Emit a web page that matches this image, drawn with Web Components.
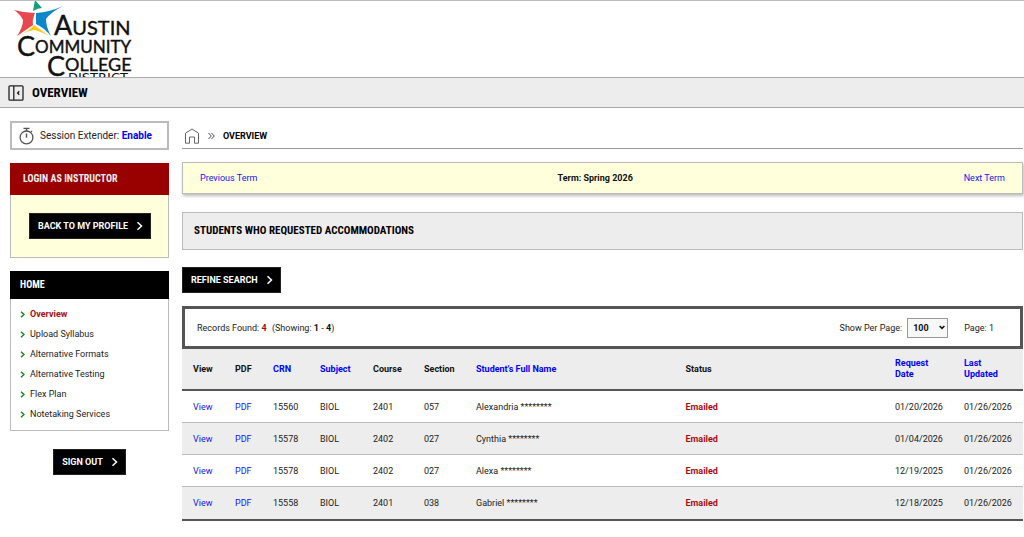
<!DOCTYPE html>
<html lang="en">
<head>
<meta charset="utf-8">
<title>Overview</title>
<style>
    body {
        margin: 0;
        background: #fff;
        color: #222;
        font: 9px/12px Roboto, sans-serif;
        --condensed: "Roboto Condensed", "Liberation Sans Narrow", Roboto, sans-serif;
        --link: #1414f0;
        --red: #a60d12;
        --line: #bbb;
        --dark: #555;
        --grey: #ededed;
        --cream: #ffffdc;
    }
</style>
</head>
<body>

<acc-page>
    <acc-logo slot="header"></acc-logo>
    <acc-title-bar slot="header">Overview</acc-title-bar>

    <acc-session slot="side"></acc-session>
    <acc-panel slot="side" kind="login">
        <span slot="heading">Login As Instructor</span>
        <acc-button>Back to My Profile</acc-button>
    </acc-panel>
    <acc-panel slot="side">
        <span slot="heading">Home</span>
        <acc-menu></acc-menu>
    </acc-panel>
    <acc-button slot="side" class="signout">Sign Out</acc-button>

    <acc-crumbs>Overview</acc-crumbs>
    <acc-term-nav>Term: Spring 2026</acc-term-nav>
    <acc-section-title>Students Who Requested Accommodations</acc-section-title>
    <acc-button class="refine">Refine Search</acc-button>
    <acc-records></acc-records>
</acc-page>

<script>
// Base: clones the template of the element into an open shadow root
class AccElement extends HTMLElement {
    constructor() {
        super();
        const template = document.createElement('template');
        template.innerHTML = this.constructor.markup;
        this.attachShadow({mode: 'open'}).appendChild(template.content.cloneNode(true));
    }
}

class AccPage extends AccElement {
    static markup = `
        <style>
            :host { display: block; }
            .body { display: grid; grid-template-columns: 159px 1fr; gap: 13px; padding: 13px 1px 16px 10px; }
            aside { display: flex; flex-direction: column; gap: 13px; }
            main { display: flex; flex-direction: column; min-width: 0; }
            ::slotted(.signout) { align-self: center; margin-top: 5px; }
            ::slotted(.refine) { align-self: flex-start; margin: 17px 0 13px; }
        </style>
        <header><slot name="header"></slot></header>
        <div class="body">
            <aside><slot name="side"></slot></aside>
            <main><slot></slot></main>
        </div>
    `;
}

class AccLogo extends AccElement {
    static markup = `
        <style>
            :host { display: block; border-top: 1px solid var(--line); }
            svg { display: block; margin-left: 10px; }
            text { font-family: Lato, sans-serif; fill: #111; stroke: #111; stroke-width: .4px; }
            .cap { font-size: 27px; }
            .wide { font-size: 20px; }
            .small { font-size: 18px; }
            .long { font-size: 17px; }
            .district { font-family: "DejaVu Sans", sans-serif; font-size: 13px; stroke: none; }
        </style>
        <svg width="130" height="76" viewBox="10 1 130 76" role="img" aria-label="Austin Community College District">
            <path d="M14 10Q25 13 35 13Q32 20 33 25L17 36Q23 27 23 20Q20 14 14 10Z" fill="#e8474f"/>
            <path d="M35 0 42 8Q38 8 33 11Z" fill="#15a079"/>
            <path d="M36 13Q50 12 63 6Q51 12 46 19Q46 27 51 36Q43 27 36 24Z" fill="#0e86cb"/>
            <path d="M22 34Q30 30 34 25Q40 29 49 36Q40 31 34 30Q28 31 22 34Z" fill="#f8c820"/>
            <text x="54" y="35"><tspan class="cap">A</tspan><tspan class="wide">USTIN</tspan></text>
            <text x="17" y="53"><tspan class="cap" dy="3">C</tspan><tspan class="long" dy="-3">OMMUNITY</tspan></text>
            <text x="47" y="71"><tspan class="cap" dy="5">C</tspan><tspan class="small" dy="-5">OLLEGE</tspan></text>
            <text x="68" y="82" class="district">DISTRICT</text>
        </svg>
    `;
}

class AccTitleBar extends AccElement {
    static markup = `
        <style>
            :host {
                display: flex; align-items: center; gap: 8px; height: 29px; padding-left: 8px;
                background: var(--grey); border: solid #aaa; border-width: 1px 0;
            }
            button { display: flex; padding: 0; border: 0; background: none; }
            h1 { margin: 0; font: bold 13px/16px var(--condensed); color: #000; text-transform: uppercase; }
        </style>
        <button aria-label="Collapse menu">
            <svg width="16" height="16" viewBox="0 0 16 16" fill="none" stroke="#222">
                <rect x="1" y=".8" width="14" height="14.4" rx="1" stroke-width="1.3"/>
                <path d="M5.8 1v14" stroke-width="1.3"/>
                <path d="M11.3 6.200 9.600 8l1.700 1.800" stroke-width="1.4"/>
            </svg>
        </button>
        <h1><slot></slot></h1>
    `;
}

class AccSession extends AccElement {
    static markup = `
        <style>
            :host { display: flex; align-items: center; gap: 6px; height: 25px; padding-left: 7px; border: 2px solid var(--line); font-size: 10px; }
            svg { flex: none; }
            a { color: #00f; font-weight: bold; text-decoration: none; }
        </style>
        <svg width="15" height="18" viewBox="0 0 15 18" fill="none" stroke="#555">
            <circle cx="7.5" cy="10.4" r="6.4" stroke-width="1.3"/>
            <path d="M4.5 1.4h6M7.5 1v3M7.5 6.4v4.4M12 5l1-1" stroke-width="1.4"/>
        </svg>
        <span>Session Extender: <a href="#enable">Enable</a></span>
    `;
}

class AccPanel extends AccElement {
    static markup = `
        <style>
            :host { display: block; border: 1px solid var(--line); }
            h2 {
                margin: -1px -1px 0; padding: 6px 10px; background: #000; color: #fff;
                font: bold 10px/16px var(--condensed); text-transform: uppercase;
            }
            :host([kind="login"]) { background: var(--cream); }
            :host([kind="login"]) h2 { padding: 8px 13px; background: #900; color: #eee; }
            :host([kind="login"]) .content { padding: 18px; }
        </style>
        <h2><slot name="heading"></slot></h2>
        <div class="content"><slot></slot></div>
    `;
}

class AccButton extends AccElement {
    static markup = `
        <style>
            :host { display: flex; }
            button {
                display: flex; align-items: center; gap: 8px; height: 26px; padding: 0 7px 0 8px;
                border: 1px solid #222; background: #000; color: #fff;
                font: bold 9px/12px Roboto, sans-serif; text-transform: uppercase; white-space: nowrap;
            }
        </style>
        <button>
            <slot></slot>
            <svg width="7" height="10" viewBox="0 0 7 10" fill="none" stroke="#fff" stroke-width="1.5"><path d="m1.5 1.2 4 3.8-4 3.8"/></svg>
        </button>
    `;
}

const menuItems = ['Overview', 'Upload Syllabus', 'Alternative Formats', 'Alternative Testing', 'Flex Plan', 'Notetaking Services'];

class AccMenu extends AccElement {
    static markup = `
        <style>
            :host { display: block; padding: 5px 9px 6px; }
            ul { margin: 0; padding: 0; list-style: none; }
            a { display: flex; align-items: center; gap: 5px; height: 20px; color: #222; text-decoration: none; }
            li:first-child a { color: var(--red); font-weight: bold; }
        </style>
        <nav><ul>
            ${menuItems.map(item => `
                <li><a href="#">
                    <svg width="5" height="7" viewBox="0 0 5 7" fill="none" stroke="#17851c" stroke-width="1.4"><path d="m1 .7 3 2.8-3 2.8"/></svg>
                    ${item}
                </a></li>`).join('')}
        </ul></nav>
    `;
}

class AccCrumbs extends AccElement {
    static markup = `
        <style>
            :host { display: flex; align-items: center; gap: 8px; height: 25px; padding: 2px 0 0 2px; border-bottom: 1px solid #999; }
            a { display: flex; }
            b { color: #000; text-transform: uppercase; }
        </style>
        <a href="#home" aria-label="Home">
            <svg width="16" height="16" viewBox="0 0 16 16" fill="none" stroke="#666"><path d="M1.5 15.2V5.200L8 1l6.500 4.200v10h-4V9h-5v6.200z"/></svg>
        </a>
        <svg width="7" height="8" viewBox="0 0 7 8" fill="none" stroke="#444"><path d="m.5 1 2.800 3-2.800 3M3.500 1l2.800 3-2.800 3"/></svg>
        <b><slot></slot></b>
    `;
}

class AccTermNav extends AccElement {
    static markup = `
        <style>
            :host {
                display: grid; grid-template-columns: 49fr auto 51fr; align-items: center;
                height: 30px; margin-top: 13px; padding: 0 17px;
                background: var(--cream); border: 1px solid var(--line); box-shadow: 1px 2px 3px #0004;
            }
            a { color: var(--link); text-decoration: none; }
            a:last-child { justify-self: end; }
            b { color: #111; }
        </style>
        <a href="#previous">Previous Term</a>
        <b><slot></slot></b>
        <a href="#next">Next Term</a>
    `;
}

class AccSectionTitle extends AccElement {
    static markup = `
        <style>
            :host { display: block; margin-top: 18px; padding: 10px 11px; background: var(--grey); border: 1px solid var(--line); }
            h2 { margin: 0; font: bold 11px/16px var(--condensed); color: #000; text-transform: uppercase; }
        </style>
        <h2><slot></slot></h2>
    `;
}

// [heading, column width, sortable], the two without a width share the rest
const columns = [
    ['View', 42], ['PDF', 38], ['CRN', 47, true], ['Subject', 53, true], ['Course', 51], ['Section', 52],
    ["Student's Full Name", 0, true], ['Status', 0], ['Request Date', 69, true], ['Last Updated', 70, true]
];

const records = [
    ['15560', 'BIOL', '2401', '057', 'Alexandria ********', 'Emailed', '01/20/2026', '01/26/2026'],
    ['15578', 'BIOL', '2402', '027', 'Cynthia ********', 'Emailed', '01/04/2026', '01/26/2026'],
    ['15578', 'BIOL', '2402', '027', 'Alexa ********', 'Emailed', '12/19/2025', '01/26/2026'],
    ['15558', 'BIOL', '2401', '038', 'Gabriel ********', 'Emailed', '12/18/2025', '01/26/2026']
];

class AccRecords extends AccElement {
    static markup = `
        <style>
            :host { display: block; }
            .bar { display: flex; align-items: center; height: 37px; padding: 0 26px 0 12px; border: 3px solid var(--dark); }
            .bar b { color: #111; }
            .bar .count { color: var(--red); margin-right: 3px; }
            label { margin-left: auto; margin-right: 5px; }
            .select { display: grid; align-items: center; margin-right: 16px; }
            .select > * { grid-area: 1 / 1; }
            .select svg { justify-self: end; margin-right: 3px; pointer-events: none; }
            select {
                appearance: none; width: 41px; height: 20px; padding: 0 5px;
                border: 1px solid #999; border-radius: 0; background: #f8f8f8; color: #111;
                font: bold 9px/12px Roboto, sans-serif;
            }
            table { width: 100%; table-layout: fixed; border-collapse: separate; border-spacing: 0; border-bottom: 2px solid var(--dark); }
            th, td { box-sizing: border-box; padding: 0 0 0 11px; text-align: left; white-space: nowrap; }
            th { height: 42px; background: var(--grey); color: #111; line-height: 11px; white-space: normal; border-bottom: 2px solid var(--dark); }
            th:nth-last-child(-n+2) { padding-right: 16px; }
            td { height: 32px; border-bottom: 1px solid var(--line); }
            tr:last-child td { border-bottom: 0; }
            tbody tr:nth-child(even) { background: var(--grey); }
            a { color: var(--link); text-decoration: none; }
            th a { color: #00f; }
            td:nth-child(8) { color: var(--red); font-weight: bold; }
        </style>
        <div class="bar">
            <span>Records Found: <b class="count">4</b> (Showing: <b>1</b> - <b>4</b>)</span>
            <label for="per-page">Show Per Page:</label>
            <span class="select">
                <select id="per-page"><option>100</option><option>50</option><option>25</option></select>
                <svg width="6" height="5" viewBox="0 0 6 5" fill="none" stroke="#111" stroke-width="1.5"><path d="m.6 1 2.400 2.400L5.400 1"/></svg>
            </span>
            <span>Page: 1</span>
        </div>
        <table>
            <colgroup>${columns.map(([, width]) => width ? `<col style="width: ${width}px">` : '<col>').join('')}</colgroup>
            <thead><tr>
                ${columns.map(([name, , sortable]) => `<th>${sortable ? `<a href="#sort">${name}</a>` : name}</th>`).join('')}
            </tr></thead>
            <tbody>
                ${records.map(record => `<tr>
                    <td><a href="#view">View</a></td><td><a href="#pdf">PDF</a></td>
                    ${record.map(value => `<td>${value}</td>`).join('')}
                </tr>`).join('')}
            </tbody>
        </table>
    `;
}

customElements.define('acc-page', AccPage);
customElements.define('acc-logo', AccLogo);
customElements.define('acc-title-bar', AccTitleBar);
customElements.define('acc-session', AccSession);
customElements.define('acc-panel', AccPanel);
customElements.define('acc-button', AccButton);
customElements.define('acc-menu', AccMenu);
customElements.define('acc-crumbs', AccCrumbs);
customElements.define('acc-term-nav', AccTermNav);
customElements.define('acc-section-title', AccSectionTitle);
customElements.define('acc-records', AccRecords);
</script>
</body>
</html>
